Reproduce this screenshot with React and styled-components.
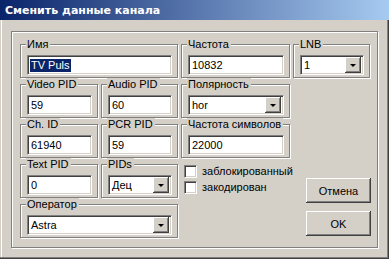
import React from "react";
import styled, { createGlobalStyle } from "styled-components";

const GlobalStyle = createGlobalStyle`
  html, body { margin: 0; padding: 0; }
  body {
    width: 389px; height: 259px; overflow: hidden;
    background: #d4d0c8;
    font-family: "Liberation Sans", Arial, sans-serif;
    font-size: 11px;
    color: #000;
  }
`;

const Window = styled.div`
  width: 389px; height: 259px;
  box-sizing: border-box;
  display: flex; flex-direction: column;
  background: #d4d0c8;
  box-shadow: inset -1px -1px 0 #404040, inset -2px -2px 0 #808080,
    inset 1px 0 0 #d4d0c8, inset 2px 0 0 #fff;
`;

const TitleBar = styled.div`
  height: 20px;
  flex: none;
  display: flex; align-items: center;
  padding-left: 5px;
  background: linear-gradient(to right, #0a246a, #a6caf0);
  color: #fff;
  font-family: "DejaVu Sans", Tahoma, sans-serif;
  font-weight: bold;
  font-size: 11px;
  letter-spacing: 0px;
`;

const Body = styled.div`
  flex: 1;
  padding: 11px;
`;

const Frame = styled.div`
  box-sizing: border-box;
  width: 367px; height: 217px;
  border: 1px solid #808080;
  box-shadow: inset 1px 1px 0 #fff, 1px 1px 0 #fff;
  padding: 12px 0 0 8px;
`;

const Grid = styled.div`
  display: grid;
  grid-template-columns: 78px 77px 109px 77px;
  grid-template-rows: repeat(5, 34px);
  column-gap: 3px;
  row-gap: 6px;
`;

const Group = styled.div`
  position: relative;
  box-sizing: border-box;
  grid-column: ${(p) => p.$col || "auto"};
  border: 1px solid #808080;
  box-shadow: inset 1px 1px 0 #fff, 1px 1px 0 #fff;
  padding: 10px 5px 0 6px;
`;

const Legend = styled.span`
  position: absolute;
  top: -7px; left: 5px;
  padding: 0 2px 0 1px;
  line-height: 13px;
  background: #d4d0c8;
  white-space: nowrap;
`;

const sunken = `
  box-sizing: border-box;
  height: 20px;
  background: #fff;
  border: 1px solid;
  border-color: #808080 #fff #fff #808080;
  box-shadow: inset 1px 1px 0 #404040, inset -1px -1px 0 #d4d0c8;
`;

const Edit = styled.div`
  ${sunken}
  display: flex; align-items: center;
  padding-left: 3px;
  line-height: 13px;
  white-space: nowrap;
`;

const Selected = styled.span`
  background: #0a246a;
  color: #fff;
  margin-left: -1px;
  padding: 0 1px;
`;

const Combo = styled.div`
  ${sunken}
  display: flex; align-items: center;
  padding: 2px 2px 2px 3px;
`;

const ComboText = styled.span`
  flex: 1;
  line-height: 13px;
`;

const DropButton = styled.div`
  width: 16px; height: 16px;
  box-sizing: border-box;
  background: #d4d0c8;
  box-shadow: inset -1px -1px 0 #404040, inset 1px 1px 0 #fff,
    inset -2px -2px 0 #808080;
  display: flex; align-items: center; justify-content: center;
  &::after {
    content: "";
    width: 0; height: 0;
    border-left: 3px solid transparent;
    border-right: 3px solid transparent;
    border-top: 3px solid #000;
    margin-top: 1px;
  }
`;

const Checks = styled.div`
  display: flex; flex-direction: column;
  gap: 3px;
  padding: 1px 0 0 3px;
`;

const CheckRow = styled.label`
  display: flex; align-items: center;
  gap: 5px;
  line-height: 13px;
`;

const CheckBox = styled.span`
  width: 13px; height: 13px;
  box-sizing: border-box;
  background: #fff;
  border: 1px solid;
  border-color: #808080 #fff #fff #808080;
  box-shadow: inset 1px 1px 0 #404040, inset -1px -1px 0 #d4d0c8;
  flex: none;
`;

const Buttons = styled.div`
  grid-column: 4;
  grid-row: 4 / span 2;
  display: flex; flex-direction: column;
  gap: 8px;
  padding: 14px 0 0 13px;
`;

const Button = styled.button`
  width: 65px; height: 25px;
  box-sizing: border-box;
  border: none;
  background: #d4d0c8;
  font-family: "Liberation Sans", Arial, sans-serif;
  font-size: 11px;
  color: #000;
  padding: 0;
  box-shadow: inset -1px -1px 0 #404040, inset 1px 1px 0 #fff,
    inset -2px -2px 0 #808080;
`;

function Field({ label, col, children }) {
  return (
    <Group $col={col}>
      <Legend>{label}</Legend>
      {children}
    </Group>
  );
}

function ComboBox({ value }) {
  return (
    <Combo>
      <ComboText>{value}</ComboText>
      <DropButton />
    </Combo>
  );
}

export default function App() {
  return (
    <>
      <GlobalStyle />
      <Window>
        <TitleBar>Сменить данные канала</TitleBar>
        <Body>
          <Frame>
            <Grid>
              <Field label="Имя" col="1 / span 2">
                <Edit><Selected>TV Puls</Selected></Edit>
              </Field>
              <Field label="Частота">
                <Edit>10832</Edit>
              </Field>
              <Field label="LNB">
                <ComboBox value="1" />
              </Field>

              <Field label="Video PID">
                <Edit>59</Edit>
              </Field>
              <Field label="Audio PID">
                <Edit>60</Edit>
              </Field>
              <Field label="Полярность">
                <ComboBox value="hor" />
              </Field>
              <div />

              <Field label="Ch. ID">
                <Edit>61940</Edit>
              </Field>
              <Field label="PCR PID">
                <Edit>59</Edit>
              </Field>
              <Field label="Частота символов">
                <Edit>22000</Edit>
              </Field>
              <div />

              <Field label="Text PID">
                <Edit>0</Edit>
              </Field>
              <Field label="PIDs">
                <ComboBox value="Дец" />
              </Field>
              <Checks>
                <CheckRow><CheckBox />заблокированный</CheckRow>
                <CheckRow><CheckBox />закодирован</CheckRow>
              </Checks>
              <Buttons>
                <Button>Отмена</Button>
                <Button>OK</Button>
              </Buttons>

              <Field label="Оператор" col="1 / span 2">
                <ComboBox value="Astra" />
              </Field>
            </Grid>
          </Frame>
        </Body>
      </Window>
    </>
  );
}
